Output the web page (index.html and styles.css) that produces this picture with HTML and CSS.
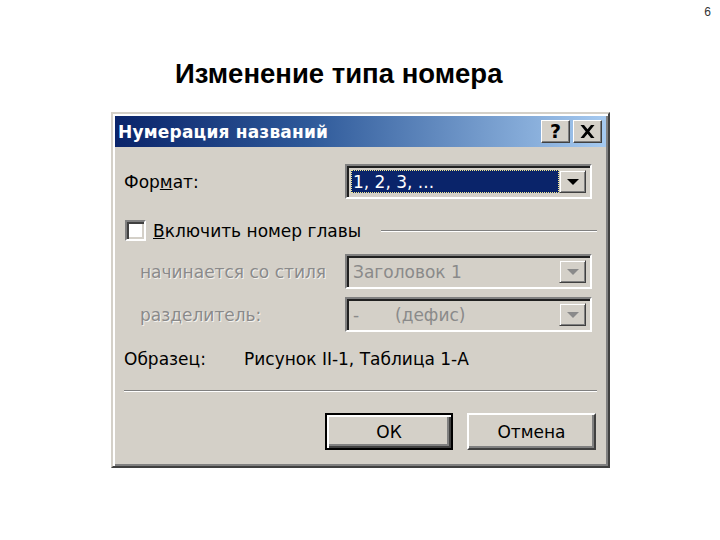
FILE: index.html
```html
<!DOCTYPE html>
<html lang="ru">
<head>
<meta charset="utf-8">
<title>Изменение типа номера</title>
<link rel="stylesheet" href="styles.css">
</head>
<body>
<div class="pagenum">6</div>
<h1 class="heading">Изменение типа номера</h1>
<div class="dialog">
  <div class="titlebar">
    <span class="title">Нумерация названий</span>
    <span class="tbtns">
      <span class="tbtn help">?</span>
      <span class="tbtn close"><svg width="15" height="13" viewBox="0 0 15 13"><path d="M0.5 0h3.5l3.5 4.3 3.5-4.3h3.5l-5.2 6.5 5.2 6.5h-3.5l-3.5-4.3-3.5 4.3h-3.5l5.2-6.5z" fill="#000"/></svg></span>
    </span>
  </div>
  <div class="body">
    <div class="row r-format">
      <span class="label">Фор<u>м</u>ат:</span>
      <div class="combo">
        <div class="field selected"><span class="focus">1, 2, 3, ...</span></div>
        <div class="arrow"><span class="tri"></span></div>
      </div>
    </div>
    <div class="row r-check">
      <span class="checkbox"></span>
      <span class="checklabel"><u>В</u>ключить номер главы</span>
      <span class="groove"></span>
    </div>
    <div class="row r-style">
      <span class="label disabled indent">начинается со стиля</span>
      <div class="combo">
        <div class="field dis">Заголовок 1</div>
        <div class="arrow"><span class="tri grey"></span></div>
      </div>
    </div>
    <div class="row r-sep">
      <span class="label disabled indent">разделитель:</span>
      <div class="combo">
        <div class="field dis"><span class="dash">-</span>(дефис)</div>
        <div class="arrow"><span class="tri grey"></span></div>
      </div>
    </div>
    <div class="row r-sample">
      <span class="samplelabel">Образец:</span>
      <span>Рисунок II-1, Таблица 1-А</span>
    </div>
    <div class="hline"></div>
    <div class="buttons">
      <div class="btn default">ОК</div>
      <div class="btn">Отмена</div>
    </div>
  </div>
</div>
</body>
</html>
```
FILE: styles.css
```css
html, body {
  margin: 0;
  padding: 0;
  background: #fff;
}
body {
  width: 720px;
  height: 540px;
  overflow: hidden;
  font-family: "DejaVu Sans", sans-serif;
}
.pagenum {
  height: 56px;
  box-sizing: border-box;
  padding: 5px 9px 0 0;
  text-align: right;
  font-family: "Liberation Sans", Arial, sans-serif;
  font-size: 12px;
  color: #333;
}
.heading {
  margin: 0 0 22px 0;
  padding-left: 175px;
  height: 34px;
  line-height: 36px;
  font-family: "Liberation Sans", Arial, sans-serif;
  font-size: 27.5px;
  font-weight: bold;
  color: #000;
}
.dialog {
  margin-left: 111px;
  width: 499px;
  box-sizing: border-box;
  background: #d4d0c8;
  border: 2px solid;
  border-color: #d4d0c8 #404040 #404040 #d4d0c8;
  box-shadow: inset 2px 2px 0 #fff, inset -2px -2px 0 #808080;
  padding: 2px 2px 12px 2px;
}
.titlebar {
  height: 31px;
  background: linear-gradient(to right, #0a246a 0%, #2f5a9a 40%, #a6caf0 100%);
  display: flex;
  align-items: center;
  justify-content: space-between;
  padding: 0 4px 0 3px;
}
.title {
  color: #fff;
  font-weight: bold;
  font-size: 17px;
  letter-spacing: 0.2px;
}
.tbtns {
  display: flex;
  gap: 3px;
}
.tbtn {
  width: 29px;
  height: 23px;
  box-sizing: border-box;
  background: #d4d0c8;
  border: 1px solid;
  border-color: #fff #404040 #404040 #fff;
  box-shadow: inset -1px -1px 0 #808080;
  display: flex;
  align-items: center;
  justify-content: center;
  font-weight: bold;
  font-size: 19px;
  color: #000;
  line-height: 1;
}
.body {
  padding: 17px 9px 0 9px;
  font-size: 17px;
  color: #000;
}
.row {
  display: flex;
  align-items: center;
}
.label {
  width: 221px;
  flex: none;
}
.label.indent {
  padding-left: 16px;
  box-sizing: border-box;
}
.disabled {
  color: #8a8a8a;
  text-shadow: 1px 1px 0 #f4f2ee;
}
.combo {
  width: 247px;
  height: 35px;
  box-sizing: border-box;
  border: 2px solid;
  border-color: #808080 #fff #fff #808080;
  box-shadow: inset 2px 2px 0 #202020, inset -2px -2px 0 #d4d0c8;
  padding: 4px;
  display: flex;
}
.field {
  flex: 1;
  display: flex;
  align-items: center;
  padding-left: 2px;
}
.field.selected {
  background: #0a246a;
  color: #fff;
  padding: 0;
}
.focus {
  flex: 1;
  height: 100%;
  box-sizing: border-box;
  border: 1px dotted #f0e68c;
  display: flex;
  align-items: center;
  padding-left: 1px;
}
.field.dis {
  color: #8a8a8a;
}
.dash {
  width: 42px;
  display: inline-block;
}
.arrow {
  width: 27px;
  flex: none;
  box-sizing: border-box;
  background: #d4d0c8;
  border: 1px solid;
  border-color: #d4d0c8 #404040 #404040 #d4d0c8;
  box-shadow: inset 1px 1px 0 #fff, inset -1px -1px 0 #808080;
  display: flex;
  align-items: center;
  justify-content: center;
}
.tri {
  width: 0;
  height: 0;
  border-left: 6px solid transparent;
  border-right: 6px solid transparent;
  border-top: 6px solid #000;
}
.tri.grey {
  border-top-color: #8a8a8a;
}
.r-format {
  height: 35px;
}
.r-check {
  margin-top: 21px;
  height: 21px;
}
.checkbox {
  width: 21px;
  height: 21px;
  box-sizing: border-box;
  margin-left: 1px;
  background: #fff;
  border: 2px solid;
  border-color: #808080 #fff #fff #808080;
  box-shadow: inset 2px 2px 0 #404040, inset -2px -2px 0 #d4d0c8;
  flex: none;
}
.checklabel {
  margin-left: 7px;
  white-space: nowrap;
}
.groove {
  flex: 1;
  margin-left: 20px;
  height: 0;
  border-top: 1px solid #808080;
  border-bottom: 1px solid #fff;
}
.r-style {
  margin-top: 13px;
}
.r-sep {
  margin-top: 8px;
}
.r-sample {
  margin-top: 17px;
  height: 20px;
}
.samplelabel {
  width: 120px;
  flex: none;
}
.hline {
  margin-top: 21px;
  border-top: 1px solid #808080;
  border-bottom: 1px solid #fff;
}
.buttons {
  margin: 21px 1px 0 0;
  display: flex;
  justify-content: flex-end;
  gap: 14px;
  padding-bottom: 4px;
}
.btn {
  width: 129px;
  height: 37px;
  box-sizing: border-box;
  background: #d4d0c8;
  border: 2px solid;
  border-color: #fff #404040 #404040 #fff;
  box-shadow: inset -2px -2px 0 #808080;
  display: flex;
  align-items: center;
  justify-content: center;
}
.btn.default {
  width: 128px;
  border: 2px solid #000;
  box-shadow: inset 2px 2px 0 #fff, inset -2px -2px 0 #404040, inset -4px -4px 0 #808080;
}
```
